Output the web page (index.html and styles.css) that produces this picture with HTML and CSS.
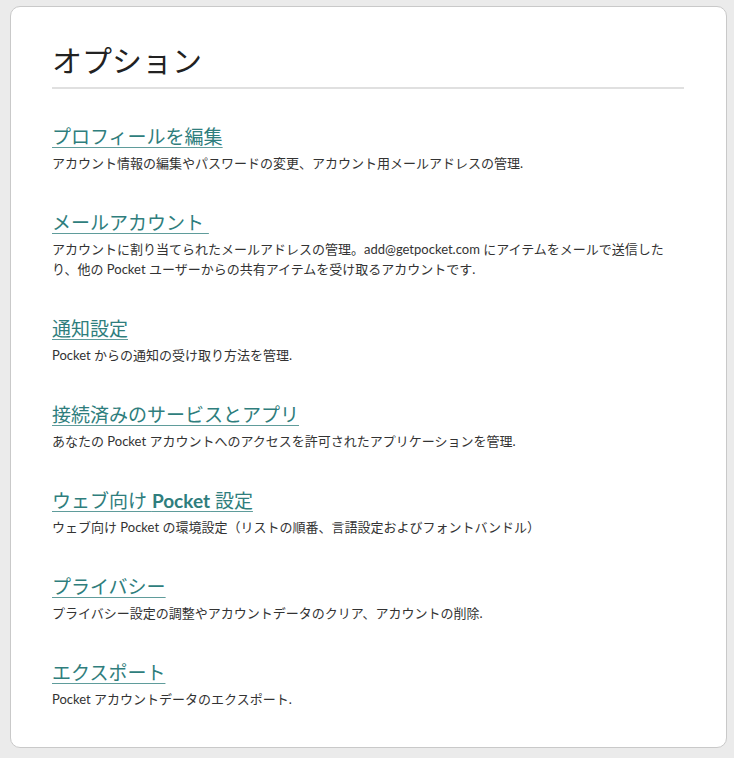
FILE: index.html
```html
<!DOCTYPE html>
<html lang="ja">
<head>
<meta charset="utf-8">
<title>オプション</title>
<link rel="stylesheet" href="styles.css">
</head>
<body>
<main class="card">
  <h1 class="page-title">オプション</h1>
  <ul class="options">
    <li class="option">
      <a class="option-link" href="#">プロフィールを編集</a>
      <p class="option-desc">アカウント情報の編集やパスワードの変更、アカウント用メールアドレスの管理.</p>
    </li>
    <li class="option">
      <a class="option-link" href="#">メールアカウント </a>
      <p class="option-desc">アカウントに割り当てられたメールアドレスの管理。add@getpocket.com にアイテムをメールで送信したり、他の Pocket ユーザーからの共有アイテムを受け取るアカウントです.</p>
    </li>
    <li class="option">
      <a class="option-link" href="#">通知設定</a>
      <p class="option-desc">Pocket からの通知の受け取り方法を管理.</p>
    </li>
    <li class="option">
      <a class="option-link" href="#">接続済みのサービスとアプリ</a>
      <p class="option-desc">あなたの Pocket アカウントへのアクセスを許可されたアプリケーションを管理.</p>
    </li>
    <li class="option">
      <a class="option-link" href="#">ウェブ向け <span class="latin">Pocket</span> 設定</a>
      <p class="option-desc">ウェブ向け Pocket の環境設定（リストの順番、言語設定およびフォントバンドル）</p>
    </li>
    <li class="option">
      <a class="option-link" href="#">プライバシー</a>
      <p class="option-desc">プライバシー設定の調整やアカウントデータのクリア、アカウントの削除.</p>
    </li>
    <li class="option">
      <a class="option-link" href="#">エクスポート</a>
      <p class="option-desc">Pocket アカウントデータのエクスポート.</p>
    </li>
  </ul>
</main>
</body>
</html>
```
FILE: styles.css
```css
html, body {
  margin: 0;
  padding: 0;
}
body {
  background: #ebebeb;
  padding: 6px 7px 10px 10px;
  font-family: "Lato", "Noto Sans CJK JP", sans-serif;
  color: #333;
}
.card {
  background: #fff;
  border: 1px solid #c9c9c9;
  border-radius: 10px;
  padding: 35px 42px 34px 41px;
  min-height: 671px;
}
.page-title {
  margin: 0 0 9px;
  padding: 0;
  font-size: 30px;
  line-height: 36px;
  font-weight: 400;
  color: #222;
}
.options {
  list-style: none;
  margin: 0;
  padding: 0;
  border-top: 2px solid #e0e0e0;
  padding-top: 35px;
  display: flex;
  flex-direction: column;
  gap: 37px;
}
.option-link {
  display: inline-block;
  font-size: 19px;
  line-height: 26px;
  color: #2f7e7d;
  text-decoration: underline;
  text-decoration-color: #5f9c9b;
  text-underline-offset: 3px;
  white-space: pre;
}
.option-link .latin {
  font-weight: 700;
}
.option-desc {
  margin: 3px 0 0;
  font-size: 13px;
  line-height: 20px;
  color: #333;
  max-width: 618px;
}
```
